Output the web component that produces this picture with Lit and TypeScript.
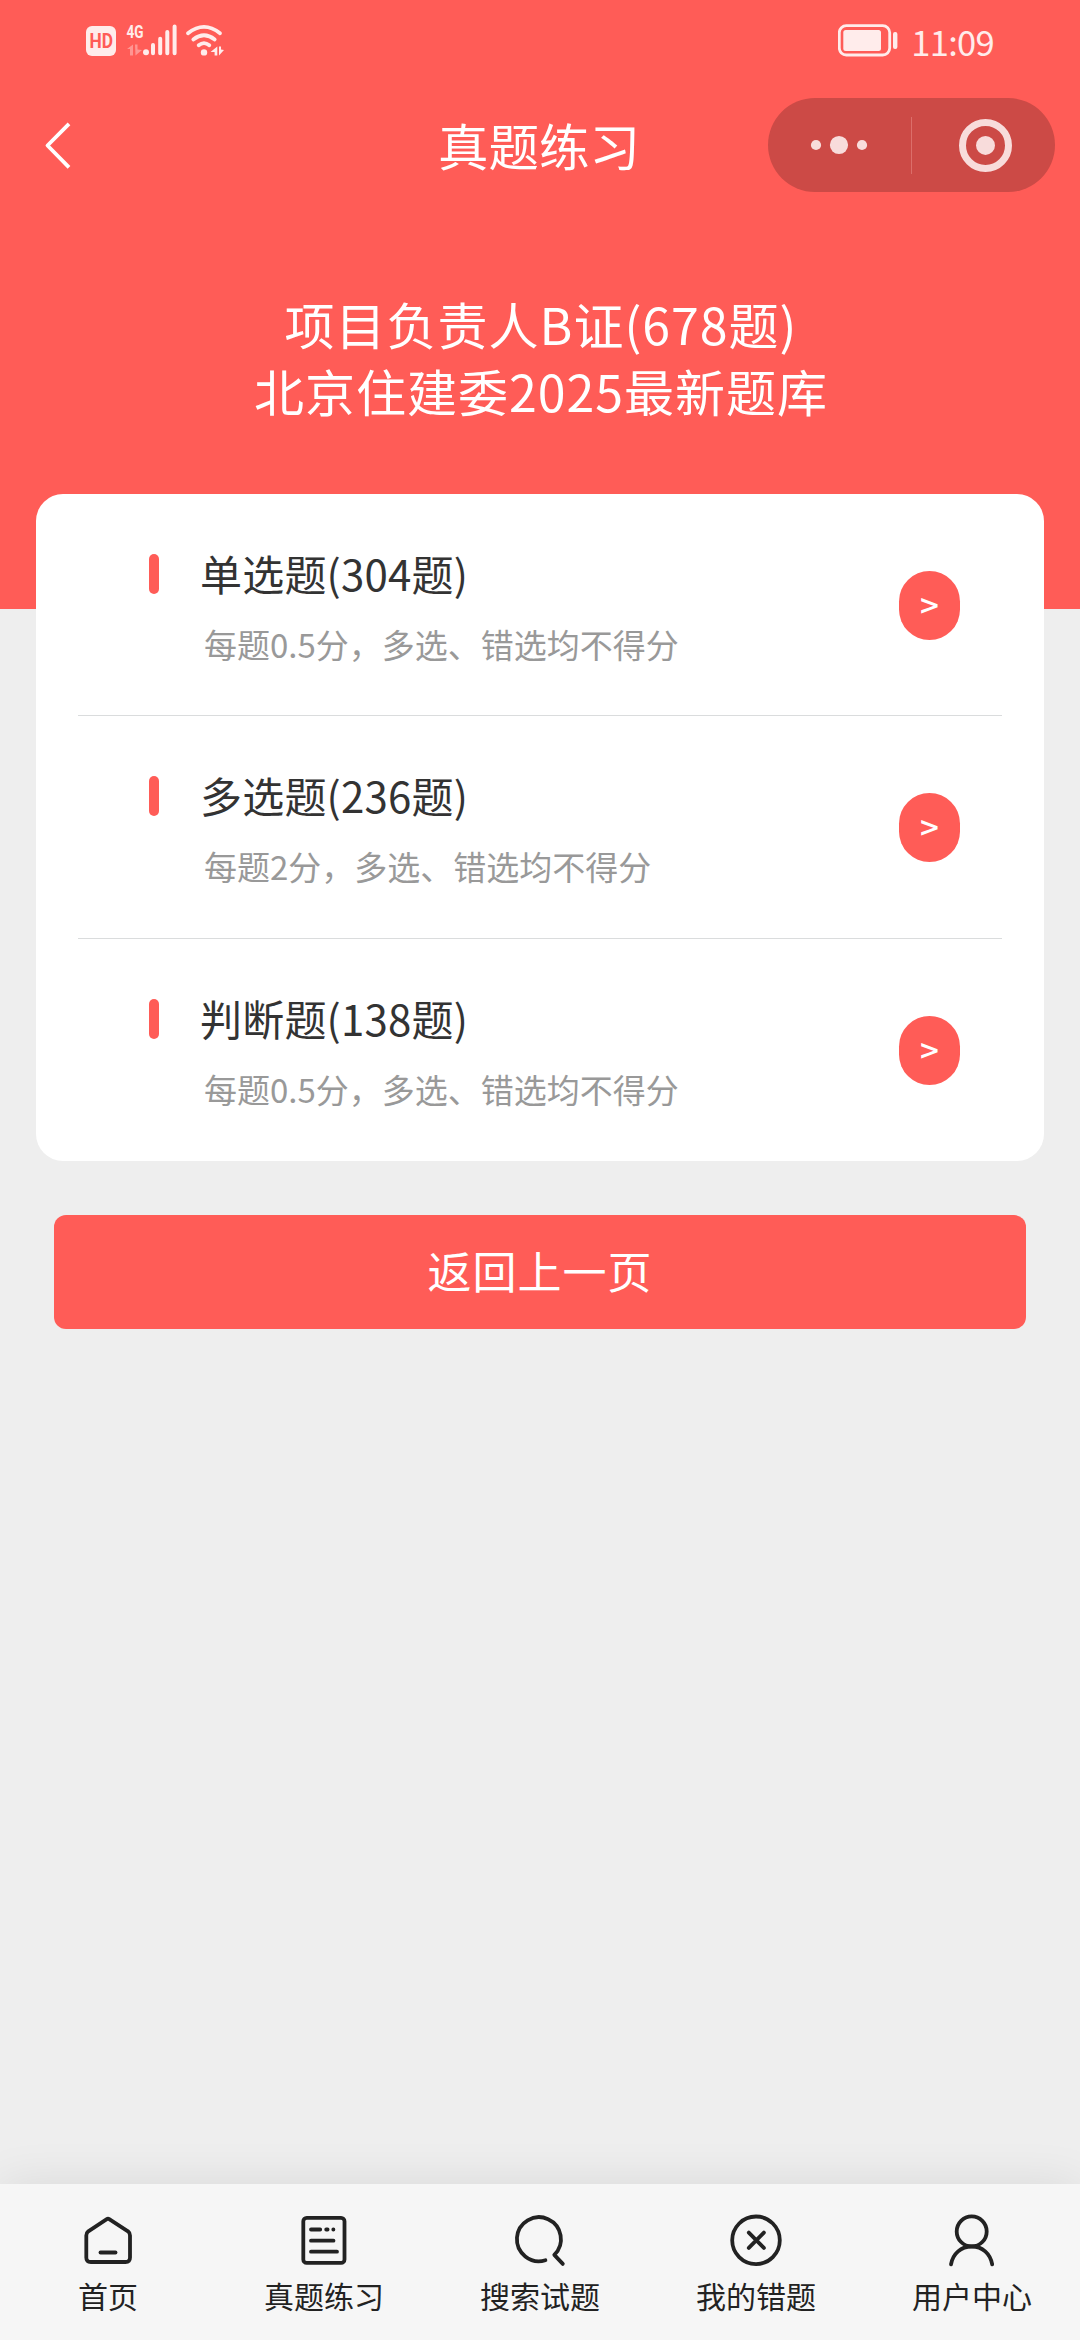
import { LitElement, html, css, svg } from "lit";
import { customElement, property } from "lit/decorators.js";

interface Section {
  title: string;
  note: string;
}

const SECTIONS: Section[] = [
  { title: "单选题(304题)", note: "每题0.5分，多选、错选均不得分" },
  { title: "多选题(236题)", note: "每题2分，多选、错选均不得分" },
  { title: "判断题(138题)", note: "每题0.5分，多选、错选均不得分" },
];

// Tab icons share a 60x60 grid centred on (30, 30).
const ICONS = {
  home: svg`<path d="M28.8 9.2 Q30 8.4 31.2 9.2 L50 21.3 Q52 22.8 52 25.5 V47.5 Q52 52 47.5 52 H12.8 Q8.3 52 8.3 47.5 V25.5 Q8.3 22.8 10.3 21.3 Z"/><path d="M22.5 42.5 H37.5"/>`,
  paper: svg`<rect x="9.3" y="7.9" width="41.2" height="45" rx="3.4"/><path d="M17 19.5 H26.2 M32.2 19.5 H33.6 M39.3 19.5 H39.4 M17 30.7 H39.5 M17 41.7 H43"/>`,
  search: svg`<path d="M35.4 50.2 A22 22 0 1 1 44.3 44.9 L52.8 53.9"/>`,
  wrong: svg`<circle cx="30" cy="30.3" r="23.8"/><path d="M22.8 22.6 L37.9 37.9 M37.9 22.6 L22.8 37.9"/>`,
  user: svg`<circle cx="29.7" cy="21.4" r="15"/><path d="M9 54.3 C11 43.5 19 36.5 29.7 36.5 S48.2 43.5 50.2 54.3"/>`,
};

const TABS: { label: string; icon: keyof typeof ICONS }[] = [
  { label: "首页", icon: "home" },
  { label: "真题练习", icon: "paper" },
  { label: "搜索试题", icon: "search" },
  { label: "我的错题", icon: "wrong" },
  { label: "用户中心", icon: "user" },
];

@customElement("status-bar")
class StatusBar extends LitElement {
  static styles = css`
    :host {
      display: flex;
      justify-content: space-between;
      align-items: center;
      box-sizing: border-box;
      height: 80px;
      padding: 0 86px 0 86px;
      color: #ffeceb;
    }
    svg {
      display: block;
    }
    .right {
      display: flex;
      align-items: center;
      gap: 13px;
    }
    .time {
      padding-top: 2px;
      font-size: 34.5px;
      line-height: 40px;
      letter-spacing: -0.7px;
    }
    .hd {
      font: 700 20px "Roboto", sans-serif;
      fill: #ff5c57;
    }
    .net {
      font: 700 18px "Roboto", sans-serif;
      fill: #ffeceb;
    }
  `;
  render() {
    return html`
      <svg width="140" height="80" viewBox="86 0 140 80" fill="#ffeceb">
        <rect x="86" y="26" width="30" height="30" rx="6" />
        <text class="hd" x="89.5" y="48.2" textLength="23.5" lengthAdjust="spacingAndGlyphs">HD</text>
        <text class="net" x="126.5" y="38" textLength="17" lengthAdjust="spacingAndGlyphs">4G</text>
        <path opacity=".4" d="M127 49 L133 44.5 V55.5 H130 V49 Z M135 44.5 H137.5 V49.5 L142 50 L135.5 55.5 Z" />
        <circle cx="146" cy="52.3" r="3" />
        <g stroke="#ffeceb" stroke-width="4" stroke-linecap="round">
          <path d="M153 45 V53.3 M160.2 38.8 V53.3 M167.3 32 V53.3 M174.6 26.5 V53.3" />
        </g>
        <circle cx="204" cy="52.4" r="3.2" />
        <g fill="none" stroke="#ffeceb" stroke-width="3.8" stroke-linecap="round">
          <path d="M188 33.2 Q204 20.5 220 33.2" />
          <path d="M193.3 39.4 Q204 31.2 214.7 39.4" />
          <path d="M198.7 45.3 Q204 41 209.3 45.3" />
        </g>
        <path d="M210.5 52 L217.3 46.5 V55.5 H214.6 V52 Z M219 46.5 H221 V49.5 L224 50 L219 55.5 Z" />
      </svg>
      <div class="right">
        <svg width="60" height="80" viewBox="838 0 60 80" fill="#ffeceb">
          <rect x="839.3" y="25.6" width="50.4" height="29.4" rx="7" fill="none" stroke="#ffeceb" stroke-width="2.8" />
          <rect x="843.3" y="30" width="37.7" height="21" rx="2.5" />
          <rect x="893" y="32" width="4.4" height="17" rx="2" />
        </svg>
        <span class="time">11:09</span>
      </div>
    `;
  }
}

@customElement("nav-bar")
class NavBar extends LitElement {
  static styles = css`
    :host {
      display: grid;
      grid-template-columns: 1fr auto 1fr;
      align-items: center;
      height: 130px;
      box-sizing: border-box;
      padding: 0 25px 0 38px;
      color: #fff;
    }
    svg {
      display: block;
    }
    .title {
      font-size: 50.5px;
      line-height: 70px;
      padding: 0 15px 2px 0;
    }
    .capsule {
      justify-self: end;
      display: flex;
      align-items: center;
      justify-content: center;
      width: 287px;
      height: 94px;
      border-radius: 47px;
      background: #cc4a46;
    }
  `;
  render() {
    return html`
      <svg width="40" height="60" viewBox="0 0 40 60" fill="none" stroke="#fff" stroke-width="3.8">
        <path d="M31 8.8 L9.5 30.5 L31 52.3" stroke-linejoin="round" />
      </svg>
      <span class="title">真题练习</span>
      <div class="capsule">
        <svg width="287" height="94" viewBox="768 98 287 94" fill="#f8dcdb">
          <circle cx="816" cy="145" r="5.1" />
          <circle cx="839" cy="145" r="9.1" />
          <circle cx="862" cy="145" r="5.1" />
          <rect x="911" y="117" width="1" height="57" fill="#dc6e6a" />
          <circle cx="985.5" cy="145.4" r="23" fill="none" stroke="#f8dcdb" stroke-width="7" />
          <circle cx="985.5" cy="145.4" r="9.5" />
        </svg>
      </div>
    `;
  }
}

@customElement("section-row")
class SectionRow extends LitElement {
  @property({ attribute: false }) item!: Section;
  static styles = css`
    :host {
      display: flex;
      align-items: flex-start;
      box-sizing: border-box;
      height: 222.33px;
      margin: 0 42px;
      padding: 0 42px 0 71px;
      border-bottom: 1px solid #dadcdd;
    }
    :host(:last-of-type) {
      border-bottom-color: transparent;
    }
    .mark {
      width: 10px;
      height: 40px;
      margin-top: 60px;
      border-radius: 5px;
      background: #ff5c57;
    }
    .body {
      flex: 1;
      padding: 49px 0 0 41px;
    }
    .title {
      font-size: 42px;
      line-height: 60px;
      letter-spacing: 0.2px;
      color: #333;
    }
    .note {
      padding: 16px 0 0 4px;
      font-size: 33px;
      line-height: 50px;
      color: #999;
    }
    .go {
      width: 61px;
      height: 69px;
      margin-top: 77px;
      border-radius: 31px;
      background: #ff5c57;
      color: #fff;
      font-size: 33px;
      font-weight: 500;
      line-height: 66px;
      text-align: center;
    }
  `;
  render() {
    return html`
      <div class="mark"></div>
      <div class="body">
        <div class="title">${this.item.title}</div>
        <div class="note">${this.item.note}</div>
      </div>
      <div class="go">&gt;</div>
    `;
  }
}

@customElement("tab-bar")
class TabBar extends LitElement {
  static styles = css`
    :host {
      display: grid;
      grid-template-columns: repeat(5, 1fr);
      height: 156px;
      background: #f6f6f6;
      box-shadow: 0 0 45px rgba(0, 0, 0, 0.09);
      color: #222;
    }
    .tab {
      display: flex;
      flex-direction: column;
      align-items: center;
      padding-top: 26px;
    }
    svg {
      display: block;
      fill: none;
      stroke: #222;
      stroke-width: 3.8;
      stroke-linecap: round;
      stroke-linejoin: round;
    }
    .label {
      margin-top: 5px;
      font-size: 30px;
      line-height: 40px;
    }
  `;
  render() {
    return TABS.map(
      (t) => html`
        <div class="tab">
          <svg width="60" height="60" viewBox="0 0 60 60">${ICONS[t.icon]}</svg>
          <span class="label">${t.label}</span>
        </div>
      `
    );
  }
}

@customElement("app-root")
class AppRoot extends LitElement {
  static styles = css`
    :host {
      display: flex;
      flex-direction: column;
      width: 1080px;
      height: 2340px;
      overflow: hidden;
      background: #eee;
      font-family: "Noto Sans CJK SC", sans-serif;
    }
    .top {
      box-sizing: border-box;
      height: 609px;
      flex: none;
      background: #ff5c57;
    }
    .headline {
      padding: 80px 0 0 2px;
      color: #fff;
      font-size: 50px;
      line-height: 67px;
      letter-spacing: 1px;
      text-align: center;
    }
    .card {
      flex: none;
      box-sizing: border-box;
      height: 667px;
      margin: -115px 36px 0;
      border-radius: 27px;
      background: #fff;
    }
    .back {
      flex: none;
      height: 114px;
      margin: 54px 54px 0;
      border-radius: 12px;
      background: #ff5c57;
      color: #fff;
      font-size: 44px;
      line-height: 111px;
      letter-spacing: 1px;
      text-align: center;
    }
    .spacer {
      flex: 1;
    }
  `;
  render() {
    return html`
      <div class="top">
        <status-bar></status-bar>
        <nav-bar></nav-bar>
        <div class="headline">
          <div>项目负责人B证(678题)</div>
          <div>北京住建委2025最新题库</div>
        </div>
      </div>
      <div class="card">
        ${SECTIONS.map((s) => html`<section-row .item=${s}></section-row>`)}
      </div>
      <div class="back">返回上一页</div>
      <div class="spacer"></div>
      <tab-bar></tab-bar>
    `;
  }
}
